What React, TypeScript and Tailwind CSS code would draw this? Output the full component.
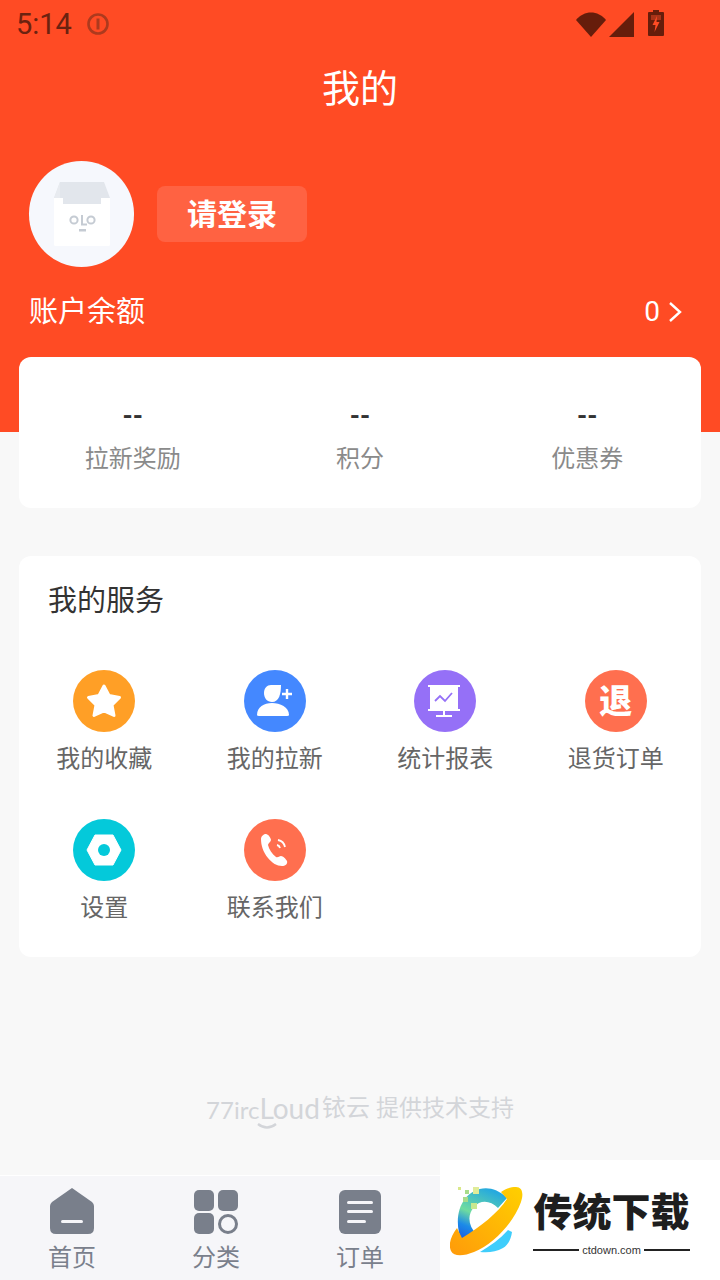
import React from "react";

const CJK = "font-['Roboto','Noto_Sans_CJK_SC',sans-serif]";

function StatusIcons() {
  return (
    <div className="flex items-start gap-[3px]">
      <svg width="30" height="25" viewBox="0 0 30 25" className="mt-[2px]">
        <path d="M0 8 C8 -2 22 -2 30 8 L15 25 Z" fill="#661d0b" />
      </svg>
      <svg width="25" height="25" viewBox="0 0 25 25" className="mt-[2px]">
        <path d="M25 0 V25 H0 Z" fill="#661d0b" />
      </svg>
      <svg width="16" height="26" viewBox="0 0 16 26" className="ml-[11px]">
        <path d="M5 0 H11 V2 H15 Q16 2 16 3 V25 Q16 26 15 26 H1 Q0 26 0 25 V3 Q0 2 1 2 H5 Z" fill="#661d0b" />
        <path d="M3 5 H13 V10 H3 Z" fill="#a83318" />
        <path d="M9 6 L4.5 15 H7.5 L6.5 22 L11.5 12 H8.5 Z" fill="#ff4b24" />
      </svg>
    </div>
  );
}

function Avatar() {
  return (
    <div className="w-[105px] h-[106px] rounded-full bg-[#f6f8fd] flex items-center justify-center shrink-0">
      <svg width="56" height="66" viewBox="0 0 56 66" className="mt-[2px]">
        <path d="M6 0 H50 L56 16 V26 H0 V16 Z" fill="#e2e6ec" />
        <path d="M0 16 L6 0 V16 Z" fill="#e8ebf0" />
        <path d="M9 0 H47 L49 22 H9 Z" fill="#e2e6ec" />
        <path d="M0 16 H9 V22 H47 V16 H56 V63 Q56 64 54 64 H2 Q0 64 0 63 Z" fill="#ffffff" />
        <circle cx="20" cy="38" r="3.6" fill="none" stroke="#c5cbd3" strokeWidth="2" />
        <path d="M28 33 V42.5 H33" fill="none" stroke="#c5cbd3" strokeWidth="2" />
        <circle cx="37" cy="38" r="3.6" fill="none" stroke="#c5cbd3" strokeWidth="2" />
        <rect x="25" y="47" width="7" height="2.5" fill="#c5cbd3" />
      </svg>
    </div>
  );
}

function Stat({ label }: { label: string }) {
  return (
    <div className="flex flex-col items-center">
      <div className="text-[26px] leading-[30px] font-bold text-[#333333]">--</div>
      <div className="mt-[11px] text-[24px] leading-[34px] text-[#8a8a8a]">{label}</div>
    </div>
  );
}

const star = (
  <svg width="36" height="36" viewBox="0 0 36 36">
    <path d="M18 3 L23 12.5 L33.5 14.5 L26 22 L28 32.5 L18 28 L8 32.5 L10 22 L2.5 14.5 L13 12.5 Z" fill="#fff" stroke="#fff" strokeWidth="3" strokeLinejoin="round" />
  </svg>
);

const person = (
  <svg width="38" height="34" viewBox="0 0 38 34">
    <path d="M15 1 H25 C25 10 23 18 16 18 C11 18 8 14 8 9 C8 4 11 1 15 1 Z" fill="#fff" />
    <path d="M1 31 C1 23 8 19 16 19 C24 19 33 23 33 31 Q33 32 31 32 H3 Q1 32 1 31 Z" fill="#fff" />
    <path d="M31 5 V15 M26 10 H36" stroke="#fff" strokeWidth="2.4" />
  </svg>
);

const board = (
  <svg width="34" height="34" viewBox="0 0 34 34">
    <rect x="0" y="1" width="32" height="2" fill="#fff" />
    <rect x="2" y="3" width="28" height="23" fill="#fff" />
    <rect x="0" y="25" width="32" height="2" fill="#fff" />
    <rect x="15" y="27" width="2" height="5" fill="#fff" />
    <rect x="8" y="31" width="16" height="2" fill="#fff" />
    <path d="M7 17 L12 12 L17 17 L24 9" fill="none" stroke="#9570f7" strokeWidth="1.8" />
  </svg>
);

const nut = (
  <svg width="36" height="32" viewBox="0 0 36 32">
    <path d="M9 1 H27 L35 16 L27 31 H9 L1 16 Z" fill="#fff" stroke="#fff" strokeLinejoin="round" />
    <circle cx="18" cy="16" r="6" fill="#04c9da" />
  </svg>
);

const phone = (
  <svg width="30" height="34" viewBox="0 0 30 34">
    <path d="M6 1 C4 1 1 3 1 6 C1 12 3 19 8 25 C12 30 17 33 22 33 C25 33 28 31 27 28 C26 26 23 23 21 23 C19 23 18 25 16 24 C12 21 9 16 8 12 C8 10 11 9 11 7 C11 5 8 1 6 1 Z" fill="#fff" />
    <path d="M17 12 A4 4 0 0 1 20 15 M18 7 A9 9 0 0 1 25 14" fill="none" stroke="#fff" strokeWidth="1.8" />
  </svg>
);

function Service({ bg, icon, label }: { bg: string; icon: React.ReactNode; label: string }) {
  return (
    <div className="flex flex-col items-center">
      <div className={`w-[62px] h-[62px] rounded-full flex items-center justify-center ${bg}`}>{icon}</div>
      <div className="mt-[9px] text-[24px] leading-[36px] text-[#666666]">{label}</div>
    </div>
  );
}

function TabItem({ icon, label }: { icon: React.ReactNode; label: string }) {
  return (
    <div className="w-[144px] flex flex-col items-center">
      <div className="h-[46px] flex items-end">{icon}</div>
      <div className="mt-[8px] text-[24px] leading-[32px] text-[#7a808c]">{label}</div>
    </div>
  );
}

function BrandMark() {
  return (
    <svg width="74" height="70" viewBox="0 0 74 70">
      <defs>
        <linearGradient id="ring" x1="0" y1="1" x2="1" y2="0">
          <stop offset="0" stopColor="#ff9a0a" />
          <stop offset="1" stopColor="#ffd000" />
        </linearGradient>
        <linearGradient id="arc" x1="0.6" y1="0" x2="0.2" y2="1">
          <stop offset="0" stopColor="#25a9df" />
          <stop offset="0.5" stopColor="#6fdc9f" />
          <stop offset="0.75" stopColor="#1c8ae8" />
          <stop offset="1" stopColor="#1a5ce0" />
        </linearGradient>
      </defs>
      <path d="M12 56 C6 42 6 24 15 13 C24 1 42 -3 57 12 L48 22 C40 14 30 14 24 21 C17 29 18 40 27 49 Z" fill="url(#arc)" />
      <path d="M7 42 C1 50 -2 58 1 65 C4 71 14 70 24 66 C44 58 64 36 71 16 C74 7 72 1 66 1 C60 1 55 3 51 6 L57 13 C48 27 30 41 12 52 Z" fill="url(#ring)" />
      <path d="M30 66 C40 60 50 53 58 44 L62 46 C61 54 57 60 53 62 C46 66 38 67 30 66 Z" fill="#3fcdfb" />
      <rect x="8" y="1" width="3" height="3" fill="#d9e88a" />
      <rect x="15" y="4" width="4" height="4" fill="#a8dc8a" />
      <rect x="23" y="1" width="6" height="7" fill="#e0ec98" />
      <rect x="13" y="11" width="5" height="5" fill="#a8dc8a" />
      <rect x="21" y="17" width="6" height="6" fill="#c8e890" />
    </svg>
  );
}

export default function App() {
  return (
    <div className={`relative w-[720px] h-[1280px] overflow-hidden flex flex-col bg-[#f8f8f8] ${CJK}`}>
      <header className="h-[432px] shrink-0 bg-[#ff4b24] flex flex-col">
        <div className="h-[48px] flex items-center pl-[16px] pr-[56px]">
          <span className="text-[29px] leading-none text-[#6b2210]">5:14</span>
          <svg width="24" height="24" viewBox="0 0 24 24" className="ml-[14px]">
            <circle cx="12" cy="12" r="9.5" fill="none" stroke="#ad3a1e" strokeWidth="2.6" />
            <rect x="10.5" y="6.5" width="3" height="11" fill="#ad3a1e" />
          </svg>
          <div className="ml-auto mt-[-1px]"><StatusIcons /></div>
        </div>
        <h1 className="mt-[18px] text-center text-[38px] leading-[46px] text-white font-normal">我的</h1>
        <div className="mt-[49px] pl-[29px] flex items-center">
          <Avatar />
          <div className="ml-[23px] w-[150px] h-[56px] rounded-[8px] bg-[#ff6242] flex items-center justify-center text-[30px] font-bold text-white">请登录</div>
        </div>
        <div className="mt-[26px] pl-[29px] pr-[38px] flex items-center justify-between text-white">
          <span className="text-[29px] leading-[38px]">账户余额</span>
          <div className="flex items-center gap-[8px]">
            <span className="text-[28px] leading-[38px]">0</span>
            <svg width="14" height="22" viewBox="0 0 14 22">
              <path d="M2 2 L12 11 L2 20" fill="none" stroke="#fff" strokeWidth="2.4" />
            </svg>
          </div>
        </div>
      </header>

      <section className="mt-[-75px] mx-[19px] h-[151px] rounded-[12px] bg-white grid grid-cols-3 pt-[44px] shrink-0">
        <Stat label="拉新奖励" />
        <Stat label="积分" />
        <Stat label="优惠券" />
      </section>

      <section className="mt-[48px] mx-[19px] h-[401px] rounded-[12px] bg-white shrink-0">
        <h2 className="pl-[29px] pt-[26px] text-[29px] leading-[38px] font-normal text-[#333333]">我的服务</h2>
        <div className="mt-[50px] grid grid-cols-4 gap-y-[42px] w-[682px]">
          <Service bg="bg-[#ff9f26]" icon={star} label="我的收藏" />
          <Service bg="bg-[#4488ff]" icon={person} label="我的拉新" />
          <Service bg="bg-[#9570f7]" icon={board} label="统计报表" />
          <Service
            bg="bg-[#ff6f4f]"
            icon={<span className="text-[33px] font-black leading-none text-white">退</span>}
            label="退货订单"
          />
          <Service bg="bg-[#04c9da]" icon={nut} label="设置" />
          <Service bg="bg-[#ff6f4f]" icon={phone} label="联系我们" />
        </div>
      </section>

      <div className="mt-[133px] h-[36px] flex items-center justify-center text-[#d3d5d9]">
        <span className="relative font-['Lato',sans-serif] leading-none">
          <span className="text-[24px]">77irc</span>
          <span className="text-[28px]">Loud</span>
          <svg width="22" height="8" viewBox="0 0 22 8" className="absolute left-[50px] bottom-[-8px]">
            <path d="M2 2 Q11 9 20 2" fill="none" stroke="#d3d5d9" strokeWidth="2.4" />
          </svg>
        </span>
        <span className="text-[24px] leading-none ml-[2px]">铱云</span>
        <span className="text-[23px] leading-none ml-[6px]">提供技术支持</span>
      </div>

      <nav className="mt-auto h-[105px] shrink-0 bg-[#f6f6f9] border-t border-white flex items-start pt-[12px]">
        <TabItem
          label="首页"
          icon={
            <svg width="44" height="46" viewBox="0 0 44 46">
              <path d="M22 0 L42 14 Q44 16 44 18 V40 Q44 46 38 46 H6 Q0 46 0 40 V18 Q0 16 2 14 Z" fill="#797f8b" />
              <rect x="11" y="32" width="22" height="3" rx="1.5" fill="#f6f6f9" />
            </svg>
          }
        />
        <TabItem
          label="分类"
          icon={
            <svg width="44" height="44" viewBox="0 0 44 44">
              <rect x="0" y="0" width="20" height="21" rx="5" fill="#797f8b" />
              <rect x="24" y="0" width="20" height="21" rx="5" fill="#797f8b" />
              <rect x="0" y="23" width="20" height="21" rx="5" fill="#797f8b" />
              <circle cx="34" cy="34" r="8.5" fill="none" stroke="#797f8b" strokeWidth="3" />
            </svg>
          }
        />
        <TabItem
          label="订单"
          icon={
            <svg width="42" height="44" viewBox="0 0 42 44">
              <rect x="0" y="0" width="42" height="44" rx="6" fill="#797f8b" />
              <rect x="8" y="11" width="26" height="3" rx="1.5" fill="#f6f6f9" />
              <rect x="8" y="20" width="26" height="3" rx="1.5" fill="#f6f6f9" />
              <rect x="8" y="30" width="19" height="3" rx="1.5" fill="#f6f6f9" />
            </svg>
          }
        />
      </nav>

      {/* Download-site badge sitting over the tab bar corner */}
      <aside className="absolute right-0 bottom-0 w-[280px] h-[120px] bg-white pl-[10px] pt-[26px] flex items-start">
        <BrandMark />
        <div className="ml-[9px] mt-[4px] w-[157px] flex flex-col items-center">
          <div className="text-[39px] leading-[46px] font-black text-[#1e1e1e] whitespace-nowrap">传统下载</div>
          <div className="mt-[7px] w-full flex items-center gap-[3px]">
            <span className="h-[2px] flex-1 bg-[#222222]" />
            <span className="font-['Liberation_Sans',sans-serif] text-[11px] leading-[14px] text-[#333333]">ctdown.com</span>
            <span className="h-[2px] flex-1 bg-[#222222]" />
          </div>
        </div>
      </aside>
    </div>
  );
}
